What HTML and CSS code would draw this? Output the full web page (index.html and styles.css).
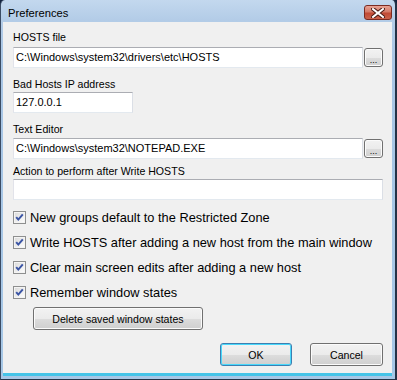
FILE: index.html
```html
<!DOCTYPE html>
<html>
<head>
<meta charset="utf-8">
<link rel="stylesheet" href="styles.css">
</head>
<body>
<div class="window">
  <div class="titlebar">
    <span class="title">Preferences</span>
    <div class="close">
      <svg width="14" height="10" viewBox="0 0 14 10"><path d="M2 1 L12 9 M12 1 L2 9" stroke="#4a1a14" stroke-width="4" stroke-linecap="square"/><path d="M2 1 L12 9 M12 1 L2 9" stroke="#ffffff" stroke-width="2" stroke-linecap="square"/></svg>
    </div>
  </div>
  <div class="client">
    <div class="label l1">HOSTS file</div>
    <div class="row r1">
      <div class="textbox wide">C:\Windows\system32\drivers\etc\HOSTS</div>
      <div class="btn browse">...</div>
    </div>
    <div class="label l2">Bad Hosts IP address</div>
    <div class="textbox short r2">127.0.0.1</div>
    <div class="label l3">Text Editor</div>
    <div class="row r3">
      <div class="textbox wide">C:\Windows\system32\NOTEPAD.EXE</div>
      <div class="btn browse">...</div>
    </div>
    <div class="label l4">Action to perform after Write HOSTS</div>
    <div class="textbox full r4"></div>
    <div class="checks">
      <div class="check"><span class="box"><svg width="13" height="13" viewBox="0 0 13 13"><path d="M3.2 6.2 L5.3 8.6 L9.8 3.4" fill="none" stroke="#3a54a4" stroke-width="2"/></svg></span><span>New groups default to the Restricted Zone</span></div>
      <div class="check"><span class="box"><svg width="13" height="13" viewBox="0 0 13 13"><path d="M3.2 6.2 L5.3 8.6 L9.8 3.4" fill="none" stroke="#3a54a4" stroke-width="2"/></svg></span><span>Write HOSTS after adding a new host from the main window</span></div>
      <div class="check"><span class="box"><svg width="13" height="13" viewBox="0 0 13 13"><path d="M3.2 6.2 L5.3 8.6 L9.8 3.4" fill="none" stroke="#3a54a4" stroke-width="2"/></svg></span><span>Clear main screen edits after adding a new host</span></div>
      <div class="check"><span class="box"><svg width="13" height="13" viewBox="0 0 13 13"><path d="M3.2 6.2 L5.3 8.6 L9.8 3.4" fill="none" stroke="#3a54a4" stroke-width="2"/></svg></span><span>Remember window states</span></div>
    </div>
    <div class="btn delete">Delete saved window states</div>
    <div class="actions">
      <div class="btn ok">OK</div>
      <div class="btn cancel">Cancel</div>
    </div>
  </div>
</div>
</body>
</html>
```
FILE: styles.css
```css
html, body {
  margin: 0;
  padding: 0;
  background: #14233f;
}
.window {
  width: 397px;
  height: 380px;
  box-sizing: border-box;
  background: linear-gradient(#c3d8ee, #b3cce7 20px, #a9c6e5 60px, #a6c7e6);
  border-left: 1px solid #3b4c64;
  border-right: 2px solid #243246;
  border-bottom: 1px solid #243246;
  border-radius: 5px 5px 0 0;
  padding: 0 3px 3px 2px;
  display: flex;
  flex-direction: column;
  font-family: "Liberation Sans", Arial, sans-serif;
  font-size: 11px;
  color: #000;
}
.titlebar {
  height: 22px;
  flex: none;
  display: flex;
  align-items: flex-start;
  justify-content: space-between;
}
.title {
  font-family: "Liberation Sans", Arial, sans-serif;
  font-size: 11.2px;
  line-height: 14px;
  margin: 6px 0 0 5px;
  color: #000;
}
.close {
  margin-top: 5px;
  width: 26px;
  height: 13px;
  border: 1px solid #7a2b22;
  border-radius: 3px;
  background: linear-gradient(#e8a394, #d47a68 45%, #c14a35 55%, #c9624c);
  display: flex;
  align-items: center;
  justify-content: center;
}
.client {
  flex: 1;
  background: #f0f0f0;
  border-bottom: 3px solid #45c4e8;
  padding: 9px 9px 0 10px;
  display: flex;
  flex-direction: column;
  align-items: flex-start;
}
.label {
  height: 13px;
  line-height: 13px;
  font-size: 10.6px;
  white-space: nowrap;
}
.l2 { margin-top: 10px; }
.l3 { margin-top: 10px; }
.l4 { margin-top: 6px; }
.row {
  display: flex;
  align-items: center;
  gap: 1px;
  width: 370px;
}
.r1 { margin-top: 3px; }
.r2 { margin-top: 1px; }
.r3 { margin-top: 2px; }
.r4 { margin-top: 1px; }
.textbox {
  box-sizing: border-box;
  height: 21px;
  background: #fff;
  border: 1px solid #dbdfe6;
  border-top-color: #abadb3;
  border-left-color: #e2e3ea;
  border-bottom-color: #e3e9ef;
  padding: 0 2px;
  line-height: 19px;
  white-space: nowrap;
  overflow: hidden;
}
.wide { width: 350px; }
.short { width: 120px; }
.full { width: 370px; }
.btn {
  box-sizing: border-box;
  border: 1px solid #707070;
  border-radius: 3px;
  background: linear-gradient(#f2f2f2, #ebebeb 50%, #dddddd 50%, #cfcfcf);
  box-shadow: inset 0 0 0 1px #fbfbfb;
  display: flex;
  align-items: center;
  justify-content: center;
  white-space: nowrap;
  font-size: 10.6px;
}
.browse {
  width: 19px;
  height: 19px;
  font-size: 9px;
  line-height: 9px;
  padding-top: 5px;
}
.checks {
  margin-top: 11px;
  display: flex;
  flex-direction: column;
  gap: 12px;
}
.check {
  display: flex;
  align-items: center;
  height: 13px;
  gap: 4px;
  white-space: nowrap;
  font-size: 12.8px;
}
.box {
  width: 13px;
  height: 13px;
  box-sizing: border-box;
  border: 1px solid #8e8f8f;
  background: linear-gradient(135deg, #d8d8d8, #f4f4f4 70%, #ffffff);
  box-shadow: inset 0 0 0 1px #f4f4f4;
  position: relative;
  flex: none;
}
.box svg {
  position: absolute;
  left: -1px;
  top: -1px;
}
.delete {
  margin-top: 8px;
  margin-left: 20px;
  width: 170px;
  height: 23px;
}
.actions {
  margin-top: 13px;
  width: 370px;
  display: flex;
  justify-content: flex-end;
  gap: 18px;
}
.ok, .cancel {
  height: 23px;
}
.ok {
  width: 72px;
  border-color: #3c7fb1;
  box-shadow: inset 0 0 0 1px #48d8fb;
}
.cancel {
  width: 73px;
}
```
